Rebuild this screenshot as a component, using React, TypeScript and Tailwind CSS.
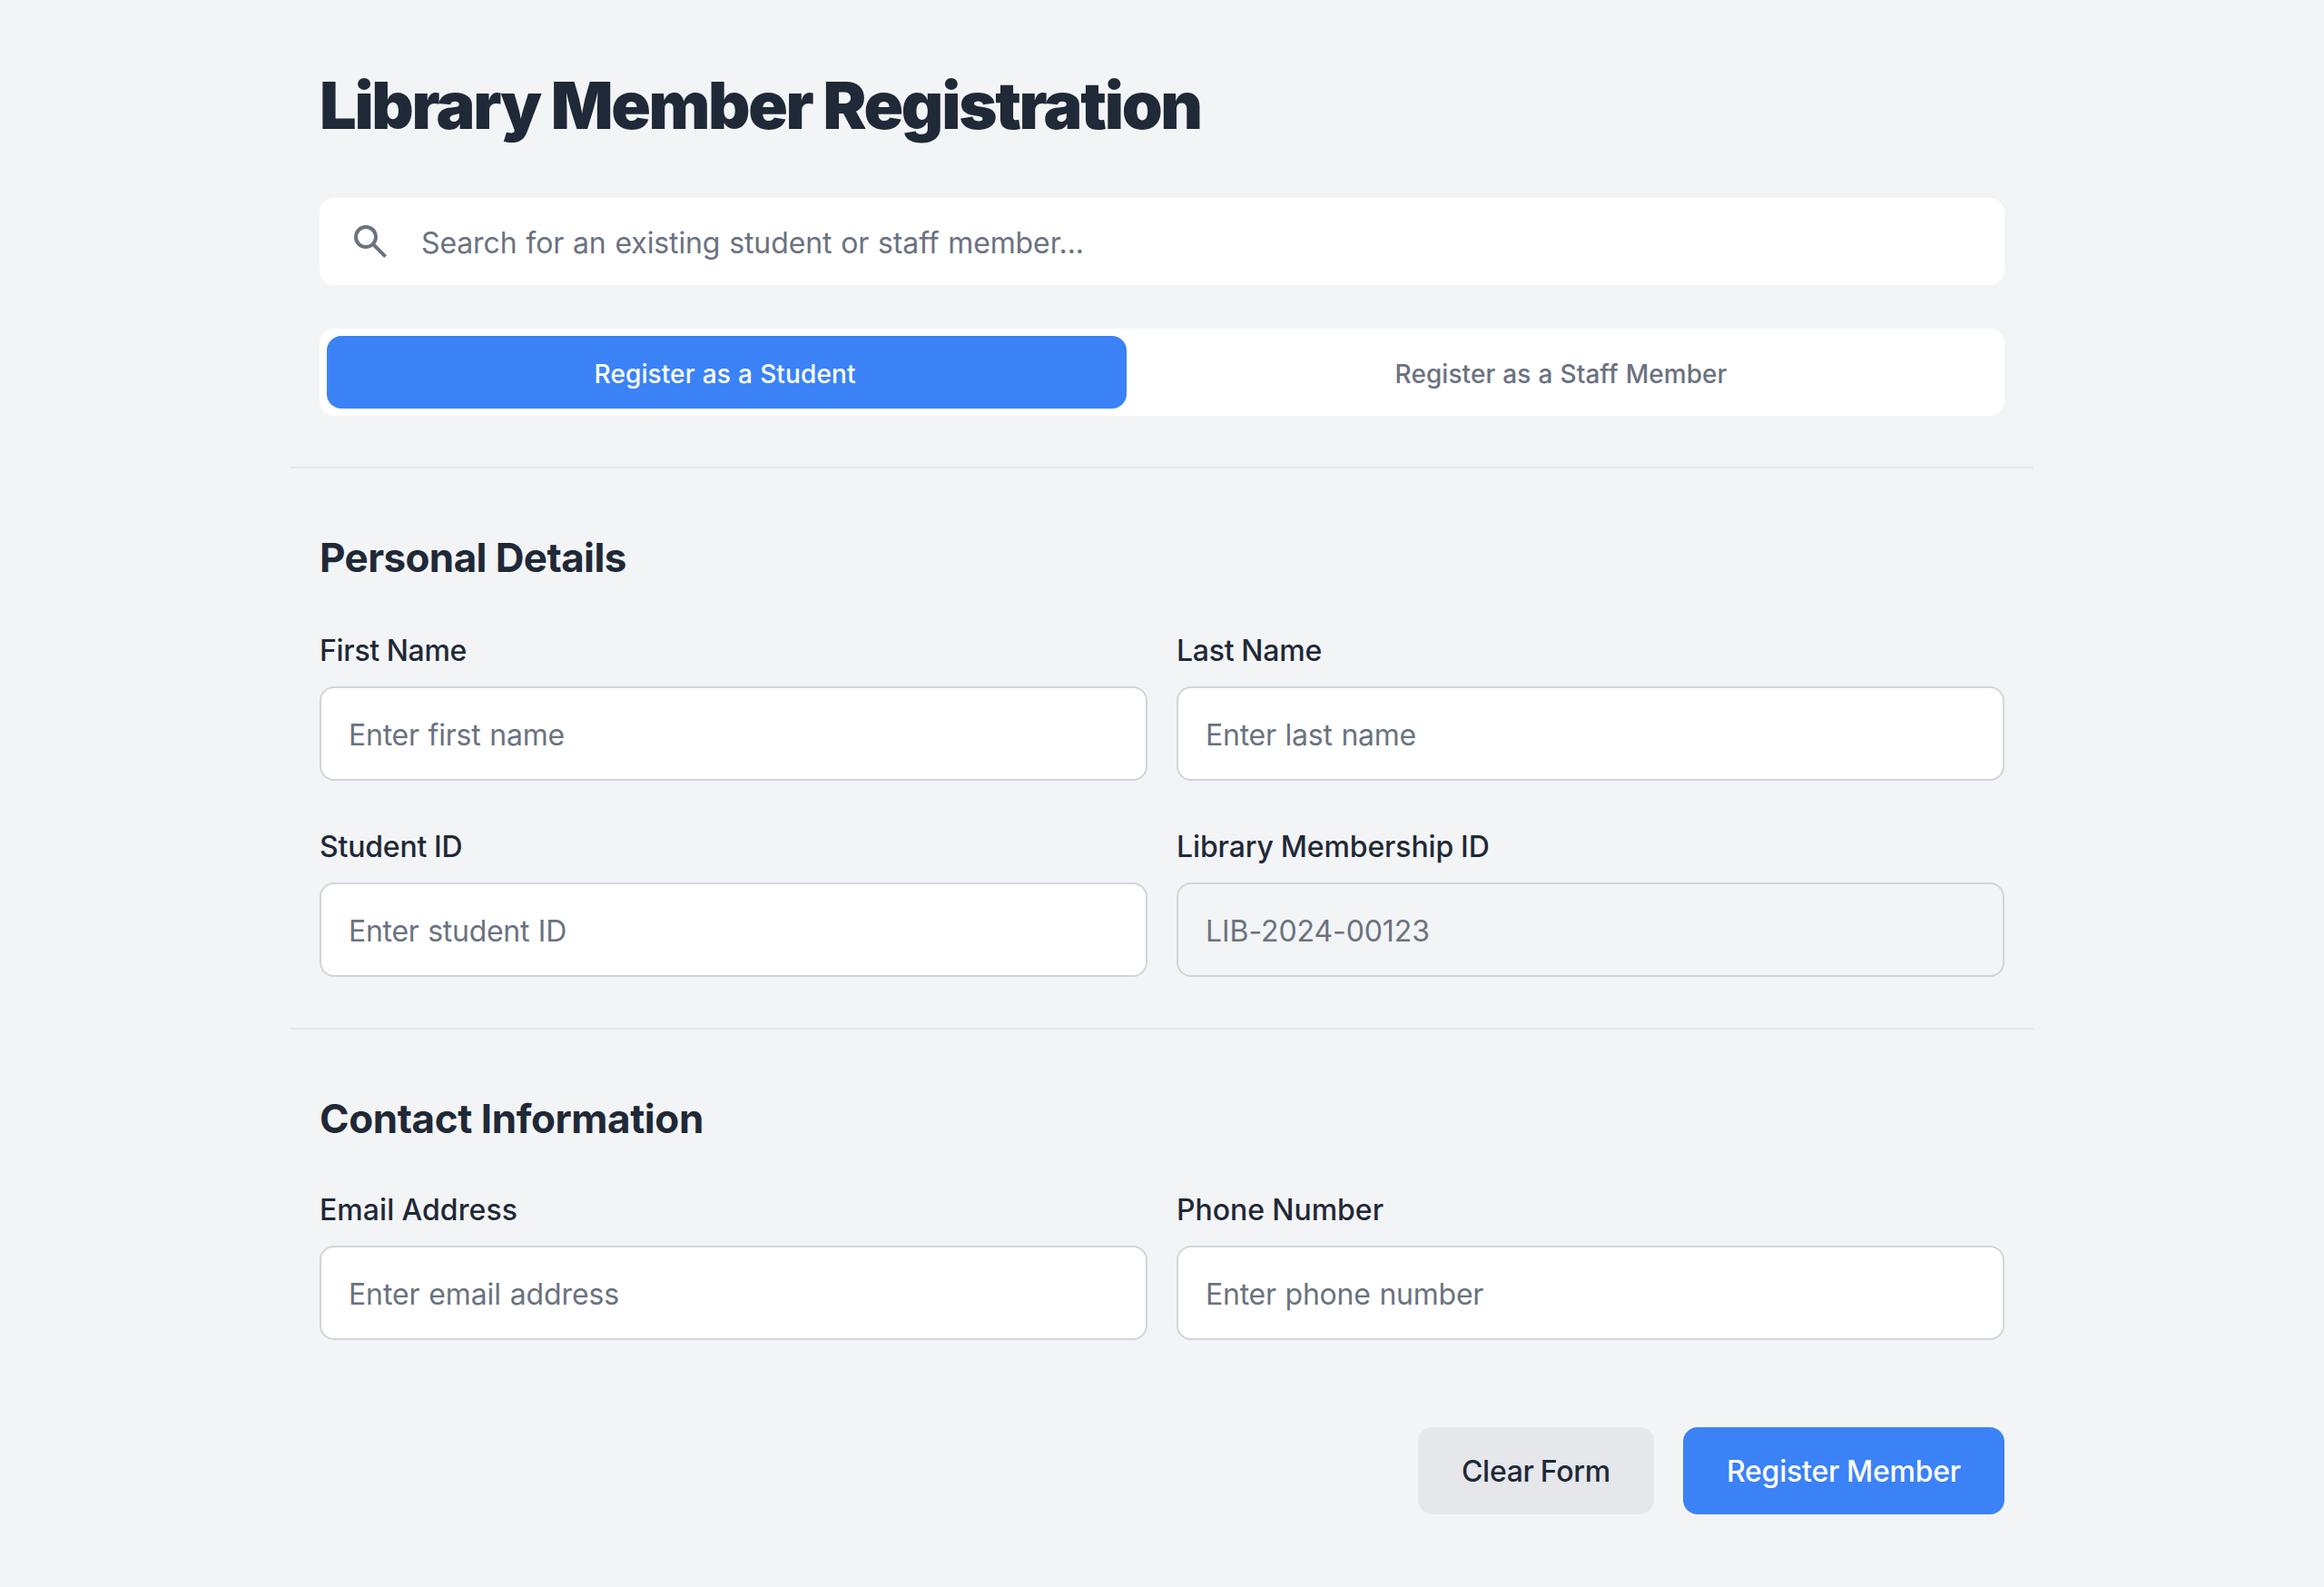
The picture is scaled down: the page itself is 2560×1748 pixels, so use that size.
import React from "react";

type FieldProps = {
  label: string;
  labelClass: string;
  placeholder: string;
  inputClass: string;
  readOnly?: boolean;
};

function Field({ label, labelClass, placeholder, inputClass, readOnly = false }: FieldProps) {
  return (
    <label className="flex flex-1 flex-col gap-[15px]">
      <span className={`pt-px text-[32px] leading-[48px] font-medium text-[#1f2937] ${labelClass}`}>
        {label}
      </span>
      <input
        readOnly={readOnly}
        placeholder={placeholder}
        className={`h-[104px] w-full rounded-2xl border-2 border-[#d1d5db] px-[30px] pt-[2px] text-[32px] outline-none placeholder:text-[#6b7280] ${
          readOnly ? "bg-[#f3f4f6]" : "bg-white"
        } ${inputClass}`}
      />
    </label>
  );
}

function SearchIcon() {
  return (
    <svg viewBox="0 -960 960 960" className="size-12 shrink-0" fill="currentColor">
      <path d="M784-120 532-372q-30 24-69 38t-83 14q-109 0-184.5-75.5T120-580q0-109 75.5-184.5T380-840q109 0 184.5 75.5T640-580q0 44-14 83t-38 69l252 252-56 56ZM380-400q75 0 127.5-52.5T560-580q0-75-52.5-127.5T380-760q-75 0-127.5 52.5T200-580q0 75 52.5 127.5T380-400Z" />
    </svg>
  );
}

export default function App() {
  return (
    <div className="min-h-[1748px] bg-[#f3f4f6] font-['Inter',sans-serif] text-[#1f2937]">
      <main className="mx-auto flex w-[1920px] flex-col pt-[71px]">
        <h1 className="px-8 text-[72px] leading-[90px] font-black tracking-[-2.33px]">
          Library Member Registration
        </h1>

        <div className="mt-[57px] px-8">
          <div className="flex h-24 items-center rounded-2xl bg-white pl-8 text-[#6b7280]">
            <SearchIcon />
            <input
              placeholder="Search for an existing student or staff member..."
              className="h-full flex-1 px-8 pt-[2px] text-[32px] tracking-[-0.12px] [word-spacing:1px] outline-none placeholder:text-[#6b7280]"
            />
          </div>
        </div>

        <div className="mt-12 px-8">
          <div className="flex h-24 rounded-2xl bg-white p-2 text-[28px] font-medium">
            <button className="flex-auto rounded-2xl bg-[#3b82f6] pt-1 pr-[18px] pl-[14px] tracking-[0.11px] [word-spacing:0.54px] text-white">
              Register as a Student
            </button>
            <button className="flex-auto rounded-2xl pt-1 pr-[17px] pl-[15px] tracking-[0.06px] [word-spacing:0.54px] text-[#6b7280]">
              Register as a Staff Member
            </button>
          </div>
        </div>

        <section className="mt-14 border-t-2 border-[#e5e7eb] px-8 pt-[70px]">
          <h2 className="text-[44px] leading-[56px] font-bold tracking-[-0.61px]">Personal Details</h2>
          <div className="mt-[50px] flex gap-8">
            <Field
              label="First Name"
              labelClass="tracking-[-0.3px] [word-spacing:-0.5px]"
              placeholder="Enter first name"
              inputClass="tracking-[-0.23px] [word-spacing:1px]"
            />
            <Field
              label="Last Name"
              labelClass="tracking-[-0.22px] [word-spacing:-0.5px]"
              placeholder="Enter last name"
              inputClass="tracking-[-0.24px] [word-spacing:1px]"
            />
          </div>
          <div className="mt-12 flex gap-8">
            <Field
              label="Student ID"
              labelClass="tracking-[-0.2px] [word-spacing:-0.5px]"
              placeholder="Enter student ID"
              inputClass="tracking-[-0.29px] [word-spacing:1px]"
            />
            <Field
              label="Library Membership ID"
              labelClass="tracking-[-0.12px] [word-spacing:-0.5px]"
              placeholder="LIB-2024-00123"
              inputClass="tracking-[-0.08px]"
              readOnly
            />
          </div>
        </section>

        <section className="mt-14 border-t-2 border-[#e5e7eb] px-8 pt-[70px]">
          <h2 className="text-[44px] leading-[56px] font-bold tracking-[-0.42px]">Contact Information</h2>
          <div className="mt-12 flex gap-8">
            <Field
              label="Email Address"
              labelClass="tracking-[0.07px] [word-spacing:-0.5px]"
              placeholder="Enter email address"
              inputClass="tracking-[-0.12px] [word-spacing:1px]"
            />
            <Field
              label="Phone Number"
              labelClass="[word-spacing:-0.5px]"
              placeholder="Enter phone number"
              inputClass="tracking-[-0.24px] [word-spacing:1px]"
            />
          </div>
        </section>

        <div className="mt-24 flex justify-end gap-8 px-8 text-[32px] font-medium">
          <button className="h-24 rounded-2xl bg-[#e5e7eb] px-12 pt-[2px] tracking-[-0.3px] [word-spacing:-1px]">
            Clear Form
          </button>
          <button className="h-24 rounded-2xl bg-[#3b82f6] px-12 pt-[2px] tracking-[-0.22px] [word-spacing:-0.5px] text-white">
            Register Member
          </button>
        </div>
      </main>
    </div>
  );
}
